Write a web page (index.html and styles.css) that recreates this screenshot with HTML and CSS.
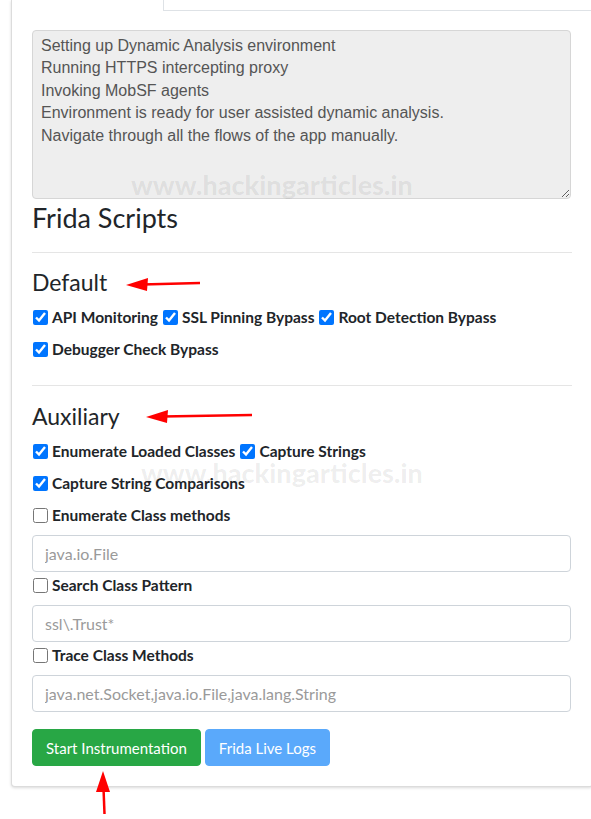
FILE: index.html
```html
<!DOCTYPE html>
<html>
<head>
<meta charset="utf-8">
<link rel="stylesheet" href="styles.css">
</head>
<body>
<div class="card">
  <div class="tabs">
    <div class="tab-active"></div>
    <div class="tab-rest"></div>
  </div>
  <div class="card-body">
    <textarea class="log" readonly rows="7">Setting up Dynamic Analysis environment
Running HTTPS intercepting proxy
Invoking MobSF agents
Environment is ready for user assisted dynamic analysis.
Navigate through all the flows of the app manually.</textarea>
    <h3 class="title">Frida Scripts</h3>
    <hr class="sep">
    <h4 class="group group-default">Default</h4>
    <div class="checks">
      <label class="check"><input type="checkbox" checked><span>API Monitoring</span></label>
      <label class="check"><input type="checkbox" checked><span>SSL Pinning Bypass</span></label>
      <label class="check"><input type="checkbox" checked><span>Root Detection Bypass</span></label>
      <label class="check"><input type="checkbox" checked><span>Debugger Check Bypass</span></label>
    </div>
    <hr class="sep sep-2">
    <h4 class="group group-aux">Auxiliary</h4>
    <div class="checks">
      <label class="check"><input type="checkbox" checked><span>Enumerate Loaded Classes</span></label>
      <label class="check"><input type="checkbox" checked><span>Capture Strings</span></label>
    </div>
    <div class="checks single">
      <label class="check"><input type="checkbox" checked><span>Capture String Comparisons</span></label>
    </div>
    <div class="checks single">
      <label class="check"><input type="checkbox"><span>Enumerate Class methods</span></label>
    </div>
    <input class="field" type="text" placeholder="java.io.File">
    <div class="checks after-field">
      <label class="check"><input type="checkbox"><span>Search Class Pattern</span></label>
    </div>
    <input class="field" type="text" placeholder="ssl\.Trust*">
    <div class="checks after-field">
      <label class="check"><input type="checkbox"><span>Trace Class Methods</span></label>
    </div>
    <input class="field" type="text" placeholder="java.net.Socket,java.io.File,java.lang.String">
    <div class="actions">
      <button class="btn btn-green">Start Instrumentation</button>
      <button class="btn btn-blue">Frida Live Logs</button>
    </div>
  </div>
</div>

<div class="watermark wm-1">www.hackingarticles.in</div>
<div class="watermark wm-2">www.hackingarticles.in</div>

<svg class="arrow arrow-1" width="78" height="16" viewBox="0 0 78 16">
  <line x1="76" y1="7" x2="18" y2="8.5" stroke="#f00" stroke-width="2.5"/>
  <polygon points="2,9 24,2 23,15" fill="#f00"/>
</svg>
<svg class="arrow arrow-2" width="110" height="16" viewBox="0 0 110 16">
  <line x1="108" y1="7" x2="18" y2="8.5" stroke="#f00" stroke-width="2.5"/>
  <polygon points="2,9 24,2 23,15" fill="#f00"/>
</svg>
<svg class="arrow arrow-3" width="16" height="46" viewBox="0 0 16 46">
  <line x1="8.5" y1="44" x2="7.5" y2="18" stroke="#f00" stroke-width="2.5"/>
  <polygon points="7,1 0,22 14,22" fill="#f00"/>
</svg>
</body>
</html>
```

FILE: styles.css
```css
html, body {
  margin: 0;
  padding: 0;
  background: #fff;
}
body {
  position: relative;
  width: 591px;
  height: 819px;
  overflow: hidden;
  font-family: "Lato", "Open Sans", sans-serif;
  color: #212529;
}
.card {
  margin-left: 11px;
  width: 580px;
  border: 1px solid #dcdcdc;
  border-top: 0;
  border-radius: 0 0 4px 4px;
  box-shadow: 0 1px 3px rgba(0,0,0,0.15);
  background: #fff;
}
.tabs {
  display: flex;
  height: 11px;
}
.tab-active {
  width: 151px;
  border-right: 1px solid #dee2e6;
}
.tab-rest {
  flex: 1;
  border-bottom: 1px solid #dee2e6;
}
.card-body {
  padding: 19px 20px 20px 20px;
}
.log {
  display: block;
  box-sizing: border-box;
  width: 539px;
  height: 169px;
  margin: 0;
  padding: 4px 8px 3px 8px;
  font-family: "Liberation Sans", Arial, sans-serif;
  font-size: 16px;
  line-height: 22.4px;
  color: #555;
  background: #eee;
  border: 1px solid #d6d6d6;
  border-radius: 4px;
  overflow: hidden;
  outline: none;
}
.title {
  margin: 2px 0 0 0;
  font-size: 27px;
  font-weight: 400;
  line-height: 34px;
}
.sep {
  margin: 17px 0 0 0;
  border: 0;
  border-top: 1px solid #e5e5e5;
}
.sep-2 {
  margin-top: 24px;
}
.group {
  margin: 15px 0 0 0;
  font-size: 23px;
  font-weight: 400;
  line-height: 29px;
}
.group-aux {
  margin-top: 16px;
}
.checks {
  display: flex;
  flex-wrap: wrap;
  row-gap: 8px;
  column-gap: 4px;
  margin-top: 8px;
}
.single {
  margin-top: 8px;
}
.check {
  display: flex;
  align-items: center;
  height: 24px;
  font-size: 15.5px;
  font-weight: 700;
  color: #212529;
}
.check input {
  width: 15px;
  height: 15px;
  margin: 0 4px 0 1px;
}
.field {
  display: block;
  box-sizing: border-box;
  width: 539px;
  height: 37px;
  margin: 8px 0 0 0;
  padding: 6px 12px;
  font-family: "Lato", "Open Sans", sans-serif;
  font-size: 16px;
  color: #495057;
  border: 1px solid #ced4da;
  border-radius: 4px;
  outline: none;
}
.field::placeholder {
  color: #9a9a9a;
}
.after-field {
  margin-top: 1px;
}
.actions {
  display: flex;
  gap: 4px;
  margin-top: 17px;
}
.btn {
  height: 37px;
  padding: 0 13px;
  font-family: "Lato", "Open Sans", sans-serif;
  font-size: 15px;
  color: #fff;
  border: 1px solid transparent;
  border-radius: 4px;
}
.btn-green {
  background: #28a745;
  border-color: #28a745;
}
.btn-blue {
  background: #5aa9fb;
  border-color: #5aa9fb;
}
.watermark {
  position: absolute;
  font-family: "Lato", "Open Sans", sans-serif;
  font-weight: 900;
  font-size: 27px;
  color: rgba(0,0,0,0.07);
  white-space: nowrap;
  pointer-events: none;
}
.wm-1 {
  left: 131px;
  top: 168px;
}
.wm-2 {
  left: 141px;
  top: 456px;
}
.arrow {
  position: absolute;
}
.arrow-1 {
  left: 124px;
  top: 276px;
}
.arrow-2 {
  left: 144px;
  top: 408px;
}
.arrow-3 {
  left: 96px;
  top: 770px;
}
```
